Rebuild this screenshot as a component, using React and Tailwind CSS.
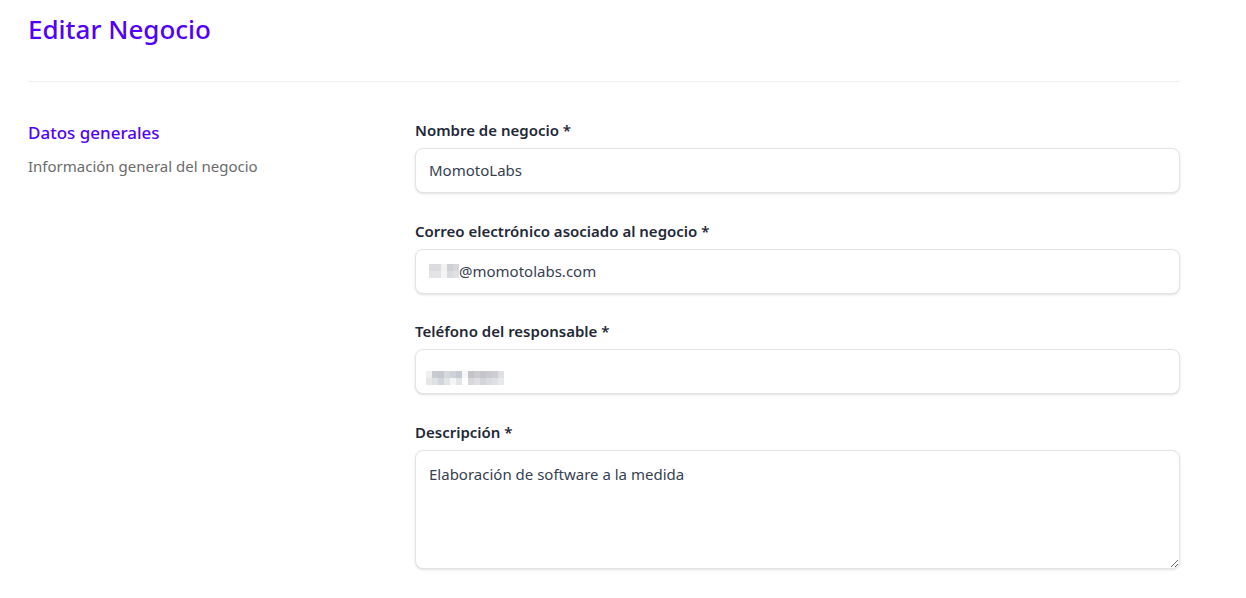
import React from "react";

const font = { fontFamily: '"Noto Sans", "Open Sans", sans-serif' };

function Label({ children }) {
  return (
    <label className="block text-[15px] leading-[22px] font-semibold text-[#1f2937] mb-[7px]">
      {children}
    </label>
  );
}

function Field({ label, children }) {
  return (
    <div>
      <Label>{label}</Label>
      {children}
    </div>
  );
}

function Box({ children }) {
  return (
    <div className="h-[45px] w-full rounded-lg border border-[#e3e4e8] bg-white shadow-sm flex items-center px-[13px] text-[15px] text-[#374151]">
      {children}
    </div>
  );
}

function Pixels({ rows }) {
  return (
    <span className="inline-flex flex-col">
      {rows.map((row, r) => (
        <span key={r} className="flex">
          {row.map((c, i) => (
            <span key={i} className="inline-block h-[7px] w-[6px]" style={{ background: c }} />
          ))}
        </span>
      ))}
    </span>
  );
}

const emailPix = [
  ["#dcdce0", "#dcdce0", "#f2f2f3", "#cfd0d5", "#d6d7db"],
  ["#e4e4e7", "#e4e4e7", "#f4f4f5", "#dadbdf", "#e0e0e4"],
];

const phonePix = [
  ["#efeff0", "#c9cbd2", "#c6c8cf", "#d6d8dc", "#cdd3da", "#c5c9d0", "#f6f6f7", "#c3c3c8", "#cbcbd0", "#c4c4ca", "#c9cad1", "#ccced4", "#dfe0e4", "#ffffff"],
  ["#e6e6e8", "#dfe1e5", "#d2d6dc", "#e2e3e6", "#f4f5f6", "#e3e4e8", "#ffffff", "#d8d8dc", "#dedfe3", "#d3d4d9", "#d9dbe0", "#dee0e4", "#e8e9ec", "#ffffff"],
];

export default function App() {
  return (
    <div className="min-h-[598px] bg-white" style={font}>
      <div className="pl-[28px] w-[1180px]">
        <h1 className="text-[26px] leading-[36px] font-medium text-[#5200fa] pt-[11px]">
          Editar Negocio
        </h1>
        <div className="mt-[34px] h-px bg-[#f1f1f3]" />
        <div className="flex pt-[37px]">
          <div className="w-[387px] shrink-0 pt-[1px]">
            <h2 className="text-[17px] leading-[26px] font-medium text-[#5200fa]">Datos generales</h2>
            <p className="mt-[9px] text-[15px] leading-[22px] text-[#6b6b6b]">
              Información general del negocio
            </p>
          </div>
          <div className="flex-1 flex flex-col gap-[26.67px]">
            <Field label="Nombre de negocio *">
              <Box>MomotoLabs</Box>
            </Field>
            <Field label="Correo electrónico asociado al negocio *">
              <Box>
                <Pixels rows={emailPix} />
                <span>@momotolabs.com</span>
              </Box>
            </Field>
            <Field label="Teléfono del responsable *">
              <Box>
                <span className="-ml-[3px] mt-[3px]">
                  <Pixels rows={phonePix} />
                </span>
              </Box>
            </Field>
            <Field label="Descripción *">
              <textarea
                className="block w-full h-[119px] rounded-lg border border-[#e3e4e8] bg-white shadow-sm px-[13px] pt-[12px] text-[15px] leading-[22px] text-[#374151] outline-none"
                defaultValue="Elaboración de software a la medida"
              />
            </Field>
          </div>
        </div>
      </div>
    </div>
  );
}
